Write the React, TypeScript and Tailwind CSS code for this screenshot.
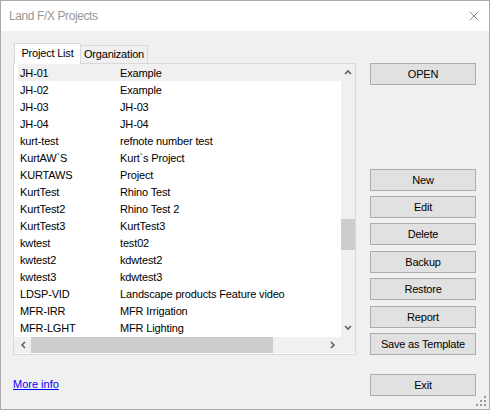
const projects: [string, string][] = [
  ["JH-01", "Example"],
  ["JH-02", "Example"],
  ["JH-03", "JH-03"],
  ["JH-04", "JH-04"],
  ["kurt-test", "refnote number test"],
  ["KurtAW`S", "Kurt`s Project"],
  ["KURTAWS", "Project"],
  ["KurtTest", "Rhino Test"],
  ["KurtTest2", "Rhino Test 2"],
  ["KurtTest3", "KurtTest3"],
  ["kwtest", "test02"],
  ["kwtest2", "kdwtest2"],
  ["kwtest3", "kdwtest3"],
  ["LDSP-VID", "Landscape products Feature video"],
  ["MFR-IRR", "MFR Irrigation"],
  ["MFR-LGHT", "MFR Lighting"],
];

function Chevron({ dir }: { dir: "up" | "down" | "left" | "right" }) {
  const d = {
    up: "M1 5 L4 2 L7 5",
    down: "M1 2 L4 5 L7 2",
    left: "M5 1 L2 4 L5 7",
    right: "M2 1 L5 4 L2 7",
  }[dir];
  return (
    <svg width="8" height="8" viewBox="0 0 8 8" className="block">
      <path d={d} fill="none" stroke="#606060" strokeWidth="1.6" />
    </svg>
  );
}

function Button({ label, className = "" }: { label: string; className?: string }) {
  return (
    <button
      className={`h-[22px] w-[106px] border border-[#adadad] bg-[#e1e1e1] pt-[1px] text-[11px] leading-none tracking-[-0.2px] text-black ${className}`}
    >
      {label}
    </button>
  );
}

export default function App() {
  return (
    <div
      className="relative flex h-[410px] w-[490px] flex-col border border-[#aaaaaa] bg-[#f0f0f0]"
      style={{ fontFamily: '"Liberation Sans", Arial, sans-serif' }}
    >
      {/* title bar */}
      <div className="flex h-[30px] items-center justify-between bg-white pl-[8px] pr-[10px]">
        <span className="text-[12px] tracking-[-0.4px] text-[#999999]">Land F/X Projects</span>
        <svg width="10" height="10" viewBox="0 0 10 10" className="mb-[1px]">
          <path d="M0.5 0.5 L9.5 9.5 M9.5 0.5 L0.5 9.5" stroke="#8a8a8a" strokeWidth="1" />
        </svg>
      </div>

      <div className="flex flex-1 pl-[12px]">
        {/* left column */}
        <div className="flex w-[343px] flex-col pt-[12px]">
          <div className="flex h-[20px] items-end pl-[1px] text-[11px] tracking-[-0.2px] text-black">
            <div className="relative z-10 -mb-px flex h-[21px] w-[67px] items-center justify-center border border-b-0 border-[#d9d9d9] bg-white pb-[2px]">
              Project List
            </div>
            <div className="flex h-[18px] w-[67px] items-center justify-center border-r border-t border-[#d9d9d9] bg-[#f0f0f0]">
              Organization
            </div>
          </div>
          <div className="grid h-[292px] grid-cols-[327px_14px] grid-rows-[273px_16px_1px] border border-[#d9d9d9] bg-white">
            <div className="overflow-hidden pl-[4px] text-[11px] tracking-[-0.15px] text-black">
              {projects.map(([code, name], i) => (
                <div
                  key={code}
                  className={`flex h-[17px] items-center pt-[1px] ${i === 0 ? "bg-[#f0f0f0]" : ""}`}
                >
                  <span className="w-[100px] pl-[2px]">{code}</span>
                  <span className="pl-[2px] whitespace-nowrap">{name}</span>
                </div>
              ))}
            </div>
            <div className="flex flex-col items-center bg-[#f0f0f0]">
              <div className="flex h-[17px] items-center justify-center pt-[1px]">
                <Chevron dir="up" />
              </div>
              <div className="flex-1 w-full">
                <div className="mt-[138px] h-[31px] w-full bg-[#cdcdcd]" />
              </div>
              <div className="flex h-[17px] items-center justify-center pb-[1px]">
                <Chevron dir="down" />
              </div>
            </div>
            <div className="flex items-center bg-[#f0f0f0]">
              <div className="flex h-full w-[17px] items-center justify-center pl-[2px]">
                <Chevron dir="left" />
              </div>
              <div className="h-full w-[242px] bg-[#cdcdcd]" />
              <div className="flex-1" />
              <div className="flex h-full w-[17px] items-center justify-center">
                <Chevron dir="right" />
              </div>
            </div>
            <div className="bg-[#f0f0f0]" />
            <div className="col-span-2" />
          </div>
          <a
            href="#"
            className="mt-[22px] w-fit text-[11px] leading-[14px] text-[#0000ff] underline"
          >
            More info
          </a>
        </div>

        {/* right column */}
        <div className="ml-[14px] flex flex-col pt-[32px]">
          <Button label="OPEN" />
          <div className="mt-[84px] flex flex-col gap-[5px]">
            <Button label="New" />
            <Button label="Edit" />
            <Button label="Delete" />
            <Button label="Backup" className="mt-[1px]" />
            <Button label="Restore" />
            <Button label="Report" className="mt-[1px]" />
            <Button label="Save as Template" />
          </div>
          <Button label="Exit" className="mt-[19px]" />
        </div>
      </div>

      {/* resize grip */}
      <div className="absolute bottom-[3px] right-[3px] grid grid-cols-3 gap-[2px]">
        <span className="h-[2px] w-[2px]" />
        <span className="h-[2px] w-[2px]" />
        <span className="h-[2px] w-[2px] bg-[#999999]" />
        <span className="h-[2px] w-[2px]" />
        <span className="h-[2px] w-[2px] bg-[#999999]" />
        <span className="h-[2px] w-[2px] bg-[#999999]" />
        <span className="h-[2px] w-[2px] bg-[#999999]" />
        <span className="h-[2px] w-[2px] bg-[#999999]" />
        <span className="h-[2px] w-[2px] bg-[#999999]" />
      </div>
    </div>
  );
}
